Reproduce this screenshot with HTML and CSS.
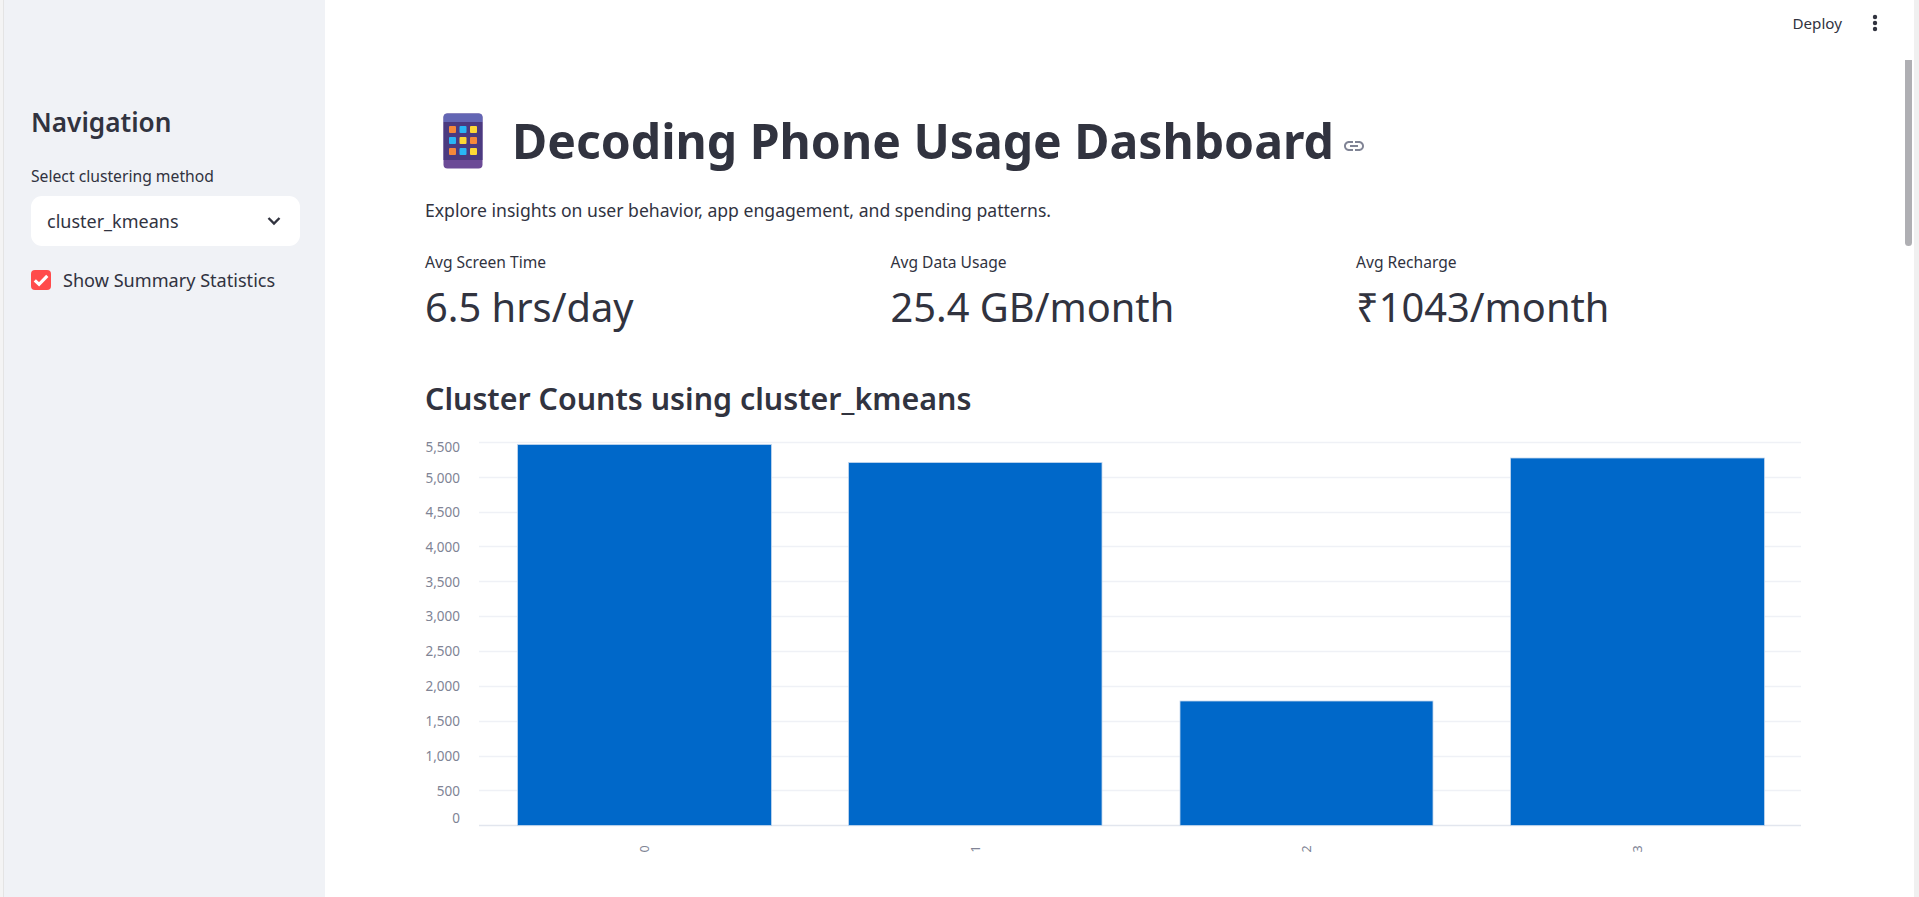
FILE: index.html
```html
<!DOCTYPE html>
<html lang="en">
<head>
<meta charset="utf-8">
<title>Decoding Phone Usage Dashboard</title>
<link rel="stylesheet" href="styles.css">
</head>
<body>
<div class="app">
  <div class="edge"></div>
  <aside class="sidebar">
    <h2 class="nav-title">Navigation</h2>
    <label class="field-label">Select clustering method</label>
    <div class="select">
      <span>cluster_kmeans</span>
      <svg class="chevron" viewBox="0 0 14 10" width="14" height="10"><path d="M1.5 2l5.5 5.5L12.500 2" fill="none" stroke="#31333f" stroke-width="2.400"/></svg>
    </div>
    <div class="check-row">
      <span class="checkbox"><svg viewBox="0 0 20 20" width="20" height="20"><path d="M3.800 10.300l4.300 4 8.200-8.400" fill="none" stroke="#fff" stroke-width="3.200"/></svg></span>
      <span>Show Summary Statistics</span>
    </div>
  </aside>
  <main class="main">
    <header class="topbar">
      <span class="deploy">Deploy</span>
      <svg class="kebab" viewBox="0 0 6 18" width="6" height="18"><circle cx="3" cy="3" r="2.200"/><circle cx="3" cy="9" r="2.200"/><circle cx="3" cy="15" r="2.200"/></svg>
    </header>
    <div class="content">
      <div class="title-row">
        <svg class="emoji" viewBox="0 0 40 56" width="40" height="56">
          <rect x="0.500" y="0.500" width="39" height="55" rx="4" fill="#6b4a96"/>
          <path d="M0.500 9V4.500a4 4 0 0 1 4-4h31a4 4 0 0 1 4 4V9z" fill="#6366b4"/>
          <rect x="0.500" y="9" width="39" height="38" fill="#4b3a80"/>
          <g>
            <rect x="6" y="13" width="7" height="7" rx="1" fill="#f5883a"/><rect x="16.500" y="13" width="7" height="7" rx="1" fill="#29b6f6"/><rect x="27" y="13" width="7" height="7" rx="1" fill="#fdd835"/>
            <rect x="6" y="24" width="7" height="7" rx="1" fill="#29b6f6"/><rect x="16.500" y="24" width="7" height="7" rx="1" fill="#fdd835"/><rect x="27" y="24" width="7" height="7" rx="1" fill="#f5883a"/>
            <rect x="6" y="35" width="7" height="7" rx="1" fill="#f5883a"/><rect x="16.500" y="35" width="7" height="7" rx="1" fill="#29b6f6"/><rect x="27" y="35" width="7" height="7" rx="1" fill="#fdd835"/>
          </g>
        </svg>
        <h1 class="title">Decoding Phone Usage Dashboard</h1>
        <svg class="link-icon" viewBox="0 0 24 24" width="24" height="24"><path d="M3.900 12c0-1.710 1.390-3.100 3.100-3.100h4V7H7c-2.760 0-5 2.240-5 5s2.240 5 5 5h4v-1.900H7c-1.710 0-3.100-1.390-3.100-3.100zM8 13h8v-2H8v2zm9-6h-4v1.900h4c1.710 0 3.100 1.390 3.100 3.100s-1.390 3.100-3.100 3.100h-4V17h4c2.760 0 5-2.240 5-5s-2.240-5-5-5z" fill="#808495"/></svg>
      </div>
      <p class="intro">Explore insights on user behavior, app engagement, and spending patterns.</p>
      <section class="metrics">
        <div class="metric"><div class="metric-label">Avg Screen Time</div><div class="metric-value">6.5 hrs/day</div></div>
        <div class="metric"><div class="metric-label">Avg Data Usage</div><div class="metric-value">25.4 GB/month</div></div>
        <div class="metric"><div class="metric-label">Avg Recharge</div><div class="metric-value">₹1043/month</div></div>
      </section>
      <h2 class="section-title">Cluster Counts using cluster_kmeans</h2>
      <svg class="chart" viewBox="0 0 1400 460" width="1400" height="460">
        <g class="grid">
          <path d="M54 12.500H1376M54 47.500H1376M54 82.500H1376M54 116.500H1376M54 151.500H1376M54 186.500H1376M54 221.500H1376M54 256.500H1376M54 291.500H1376M54 326.500H1376M54 360.500H1376"/>
          <path class="axis" d="M54 395.500H1376"/>
        </g>
        <g class="bars">
          <rect x="92.500" y="14.500" width="254" height="381"/>
          <rect x="423.500" y="32.500" width="253.500" height="363"/>
          <rect x="755" y="271" width="253" height="124.500"/>
          <rect x="1085.500" y="28" width="254" height="367.500"/>
        </g>
        <g class="ylabels">
          <text x="35" y="22">5,500</text><text x="35" y="52.500">5,000</text><text x="35" y="87">4,500</text><text x="35" y="121.500">4,000</text><text x="35" y="156.500">3,500</text><text x="35" y="191">3,000</text><text x="35" y="226">2,500</text><text x="35" y="261">2,000</text><text x="35" y="296">1,500</text><text x="35" y="331">1,000</text><text x="35" y="366">500</text><text x="35" y="393">0</text>
        </g>
        <g class="xlabels">
          <text transform="translate(224 419) rotate(-90)">0</text>
          <text transform="translate(555 419) rotate(-90)">1</text>
          <text transform="translate(886 419) rotate(-90)">2</text>
          <text transform="translate(1217 419) rotate(-90)">3</text>
        </g>
      </svg>
    </div>
    <div class="scrollbar"><div class="thumb"></div></div>
  </main>
  <div class="edge-right"></div>
</div>
</body>
</html>
```

FILE: styles.css
```css
* { box-sizing: border-box; }
html, body { margin: 0; height: 100%; overflow: hidden; }
body { font-family: "Noto Sans", "Open Sans", sans-serif; color: #31333f; background: #fff; }
.app { display: flex; height: 897px; width: 1919px; }
.edge { width: 4px; background: #f4f4f4; border-right: 1px solid #e4e4e4; flex: none; }
.edge-right { width: 5px; background: #f0f0f0; flex: none; }
.sidebar { width: 321px; flex: none; background: #f0f2f6; padding: 106px 26px 0 27px; }
.nav-title { margin: 0; font-size: 26.200px; line-height: 32px; font-weight: 600; }
.field-label { display: block; margin-top: 27px; font-size: 15.700px; line-height: 22px; }
.select { margin-top: 9px; height: 50px; width: 269px; background: #fff; border-radius: 11px; display: flex; align-items: center; justify-content: space-between; padding: 0 19px 0 16px; font-size: 18px; }
.check-row { margin-top: 22px; display: flex; align-items: center; gap: 12px; font-size: 18.100px; line-height: 24px; }
.checkbox { width: 20px; height: 20px; border-radius: 4px; background: #ff4b4b; display: block; }
.checkbox svg { display: block; }
.main { flex: 1; position: relative; min-width: 0; }
.topbar { height: 46px; display: flex; align-items: center; justify-content: flex-end; padding-right: 36px; gap: 30px; }
.deploy { font-size: 15.200px; }
.kebab { fill: #31333f; }
.content { padding: 60px 0 0 100px; }
.title-row { display: flex; align-items: center; height: 70px; }
.emoji { margin-left: 18px; flex: none; }
.title { margin: 0 0 0 29px; font-size: 48.100px; line-height: 70px; font-weight: 700; white-space: nowrap; }
.link-icon { margin: 10px 0 0 8px; flex: none; }
.intro { margin: 20px 0 0; font-size: 17.600px; line-height: 28px; }
.metrics { display: grid; grid-template-columns: repeat(3, 465.500px); margin-top: 27px; }
.metric-label { font-size: 15.600px; line-height: 22px; }
.metric-value { font-size: 39.800px; line-height: 56px; margin-top: 5.500px; }
.section-title { margin: 43px 0 0; font-size: 30.400px; line-height: 42px; font-weight: 600; }
.chart { display: block; margin: 10px 0 0 0; }
.grid path { stroke: #eff1f6; stroke-width: 1.500; fill: none; }
.grid path.axis { stroke: #e2e6ee; }
.bars rect { fill: #0068c9; stroke: #c4d8ee; stroke-width: 0.800; }
.ylabels text { font-size: 13.500px; fill: #808495; text-anchor: end; }
.xlabels text { font-size: 12.500px; fill: #808495; text-anchor: middle; }
.scrollbar { position: absolute; top: 0; right: 0; width: 12px; height: 100%; }
.thumb { position: absolute; top: 60px; left: 3px; width: 7px; height: 186px; border-radius: 0 0 4px 4px; background: #afafb3; }
```
